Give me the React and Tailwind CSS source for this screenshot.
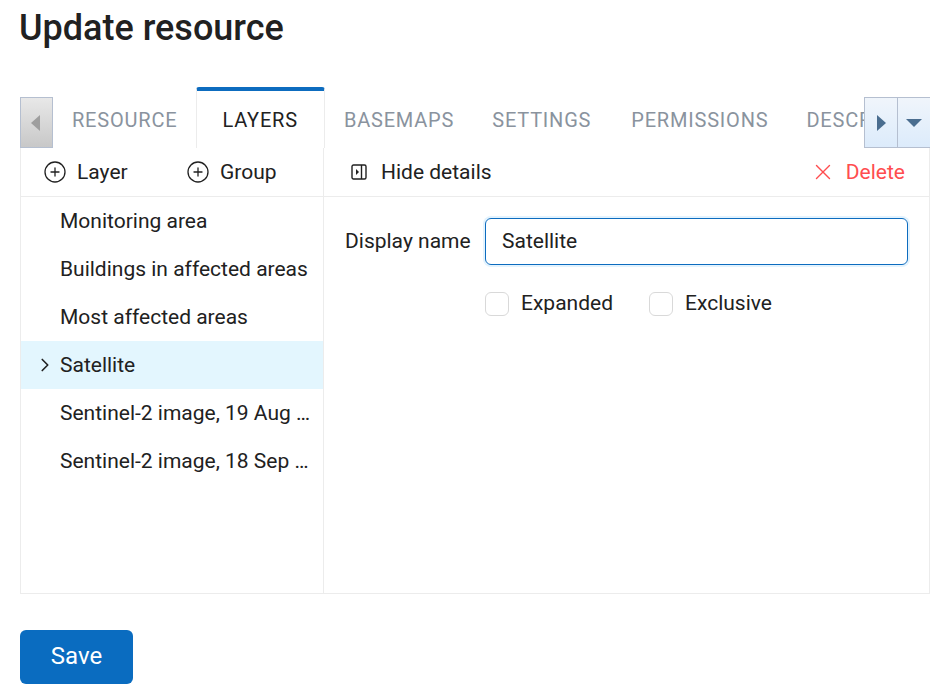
import React from "react";
import { ChevronRight, CirclePlus, X } from "lucide-react";

const layers = [
  "Monitoring area",
  "Buildings in affected areas",
  "Most affected areas",
  "Satellite",
  "Sentinel-2 image, 19 Aug 2023",
  "Sentinel-2 image, 18 Sep 2023",
];

function HideDetailsIcon() {
  return (
    <svg width="16" height="16" viewBox="0 0 16 16" fill="none" className="shrink-0">
      <rect x="1" y="1" width="14" height="14" rx="1.5" stroke="#212121" strokeWidth="1.4" />
      <path d="M10.5 1v14" stroke="#212121" strokeWidth="1.4" />
      <path d="M5 5l3 3-3 3z" fill="#212121" />
    </svg>
  );
}

function Triangle({ dir }) {
  const points = { left: "9,0 0,8 9,16", right: "0,0 9,8 0,16", down: "0,0 16,0 8,8" }[dir];
  const size = dir === "down" ? { width: 16, height: 8 } : { width: 9, height: 16 };
  const color = dir === "left" ? "#9e9e9e" : "#4a6d8f";
  return (
    <svg {...size} viewBox={`0 0 ${size.width} ${size.height}`}>
      <polygon points={points} fill={color} />
    </svg>
  );
}

export default function App() {
  return (
    <div className="h-[697px] w-[943px] overflow-hidden bg-white px-5 font-['Roboto',sans-serif] text-[#212121]">
      <h1 className="-ml-[1px] h-[87px] pt-[6px] text-[36px] leading-[44px] font-medium">Update resource</h1>

      {/* Tabs */}
      <div className="flex h-[61px] w-[910px] items-end">
        <button className="flex h-[51px] w-[33px] shrink-0 items-center justify-center border border-[#b5bfd0] bg-gradient-to-b from-[#e8e8e8] to-[#c8c8c8] pr-[2px]">
          <Triangle dir="left" />
        </button>
        <div className="flex h-[61px] min-w-0 flex-1 overflow-hidden text-[20px] tracking-[0.8px] text-[#8a939e]">
          <div className="shrink-0 pt-[18px] pr-[19px] pl-[19px]">RESOURCE</div>
          <div className="h-[61px] shrink-0 rounded-t-[3px] border-x border-[#ececec] border-t-4 border-t-[#0d6cbf] pt-[14px] pr-[26px] pl-[25px] text-[#212121]">
            LAYERS
          </div>
          <div className="shrink-0 px-[19px] pt-[18px]">BASEMAPS</div>
          <div className="shrink-0 pt-[18px] pr-[21px] pl-[19px]">SETTINGS</div>
          <div className="shrink-0 px-[19px] pt-[18px]">PERMISSIONS</div>
          <div className="shrink-0 px-[19px] pt-[18px]">DESCRIPTION</div>
        </div>
        <button className="flex h-[51px] w-[33px] shrink-0 items-center justify-center border border-r-0 border-[#b5bfd0] bg-gradient-to-b from-[#f0f5fb] to-[#dcebfb]">
          <Triangle dir="right" />
        </button>
        <button className="flex h-[51px] w-[33px] shrink-0 items-center justify-center border border-r-0 border-[#b5bfd0] bg-gradient-to-b from-[#f0f5fb] to-[#dcebfb]">
          <Triangle dir="down" />
        </button>
      </div>

      {/* Panel */}
      <div className="flex h-[446px] w-[910px] border-x border-b border-[#ececec] text-[21px]">
        <div className="w-[303px] shrink-0 border-r border-[#ececec]">
          <div className="flex h-[49px] items-center border-b border-[#ececec] pl-[22px]">
            <CirclePlus size={24} strokeWidth={1.3} className="shrink-0" />
            <span className="ml-[10px] w-[109px] pt-[2px]">Layer</span>
            <CirclePlus size={24} strokeWidth={1.3} className="shrink-0" />
            <span className="ml-[10px] pt-[2px]">Group</span>
          </div>
          {layers.map((name) => (
            <div
              key={name}
              className={`flex h-12 items-center ${name === "Satellite" ? "bg-[#e3f6fe]" : ""}`}
            >
              <span className="flex w-[39px] shrink-0 justify-end pr-[4px]">
                {name === "Satellite" && <ChevronRight size={22} strokeWidth={1.8} />}
              </span>
              <span className="truncate pt-[2px] pr-[11px]">{name}</span>
            </div>
          ))}
        </div>

        <div className="min-w-0 flex-1">
          <div className="flex h-[49px] items-center border-b border-[#ececec] pr-6 pl-[27px]">
            <HideDetailsIcon />
            <span className="ml-[14px] pt-[2px]">Hide details</span>
            <X size={26} strokeWidth={1.3} className="ml-auto text-[#ff4d4f]" />
            <span className="ml-[10px] pt-[2px] text-[#ff4d4f]">Delete</span>
          </div>
          <div className="flex items-center pt-[21px] pr-[21px] pl-[21px]">
            <span className="w-[140px] shrink-0">Display name</span>
            <div className="flex h-[47px] flex-1 items-center rounded-[6px] border border-[#0d6cbf] px-4 pt-[1px] shadow-[0_0_0_2px_#e3f3fe]">
              Satellite
            </div>
          </div>
          <div className="mt-[23px] flex items-center pl-[161px]">
            <span className="h-6 w-6 rounded-[6px] border border-[#d9d9d9]" />
            <span className="ml-3 w-[128px]">Expanded</span>
            <span className="h-6 w-6 rounded-[6px] border border-[#d9d9d9]" />
            <span className="ml-3">Exclusive</span>
          </div>
        </div>
      </div>

      <button className="mt-9 h-[54px] w-[113px] rounded-[6px] bg-[#0a6cc0] pb-[3px] text-[24px] text-white">Save</button>
    </div>
  );
}
